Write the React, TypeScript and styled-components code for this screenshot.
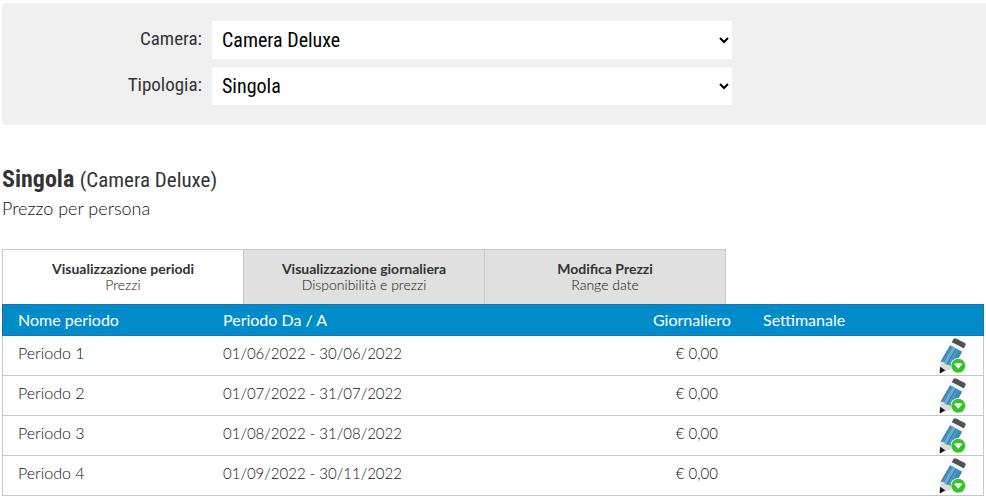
import React, { useState } from "react";
import styled, { createGlobalStyle } from "styled-components";

const GlobalStyle = createGlobalStyle`
  *, *::before, *::after { box-sizing: border-box; }
  body {
    margin: 0;
    background: #fff;
    color: #111;
    font: 300 15px/20px "Century Gothic", Lato, sans-serif;
  }
`;

const condensed = `"Liberation Sans Narrow", "Roboto Condensed", Roboto, sans-serif`;

const Page = styled.main`
  padding: 3px 0 0 2px;
`;

const FilterPanel = styled.form`
  display: grid;
  gap: 8px;
  padding: 18px 0 20px;
  background: #f0f0f0;
  border-radius: 4px 0 0 4px;
`;

const FilterRow = styled.div`
  display: grid;
  grid-template-columns: 200px minmax(0, 520px);
  column-gap: 10px;
  align-items: center;
`;

const FilterLabel = styled.label`
  color: #333;
  font: 19px/24px ${condensed};
  padding-bottom: 2px;
  text-align: right;
`;

const Select = styled.select`
  width: 100%;
  height: 38px;
  padding: 0 0 0 6px;
  border: 0;
  border-radius: 0;
  background-color: #fff;
  color: #000;
  font: 20px/24px ${condensed};
`;

const Heading = styled.header`
  padding: 40px 0 31px;
`;

const Title = styled.h1`
  margin: 0;
  color: #333;
  font: bold 24px/28px ${condensed};
`;

const RoomName = styled.span`
  font-size: 21px;
  font-weight: normal;
`;

const Subtitle = styled.p`
  margin: 4px 0 0;
  font-size: 18px;
  line-height: 20px;
`;

const Content = styled.section`
  margin-right: 2px;
`;

const Tabs = styled.div`
  display: flex;
`;

const Tab = styled.button<{ $active: boolean }>`
  flex: 0 1 242px;
  min-width: 0;
  height: 55px;
  padding: 0;
  border: 1px solid #c8c8c8;
  border-bottom: 0;
  background: ${(p) => (p.$active ? "#fff" : "#e0e0e0")};
  color: #111;
  font: 300 14px/16px "Century Gothic", Lato, sans-serif;
  cursor: pointer;

  & + & { margin-left: -1px; }
`;

const TabTitle = styled.strong`
  display: block;
  color: #333;
  font-weight: bold;
`;

const TabNote = styled.span`
  display: block;
`;

const PriceTable = styled.table`
  width: 100%;
  table-layout: fixed;
  border-collapse: separate;
  border-spacing: 0;
`;

const Col = styled.col<{ $width?: number }>`
  width: ${(p) => (p.$width ? `${p.$width}px` : "auto")};
`;

const HeaderCell = styled.th<{ $end?: boolean }>`
  height: 32px;
  padding: 0 ${(p) => (p.$end ? 20 : 0)}px 0 15px;
  border: solid #2a6ca8;
  border-width: 1px 0;
  background: #008ccb;
  color: #fff;
  font-size: 16px;
  font-weight: normal;
  text-align: ${(p) => (p.$end ? "right" : "left")};

  &:first-child { border-left-width: 1px; }
  &:last-child { border-right-width: 1px; }
`;

const Cell = styled.td<{ $end?: boolean }>`
  height: 40px;
  padding: 0 ${(p) => (p.$end ? 30 : 0)}px 5px 15px;
  border-bottom: 1px solid #c8c8c8;
  text-align: ${(p) => (p.$end ? "right" : "left")};

  &:first-child {
    border-left: 1px solid #c8c8c8;
    font-size: 16px;
  }
`;

const ActionCell = styled.td`
  padding: 0 16px 0 0;
  border: solid #c8c8c8;
  border-width: 0 1px 1px 0;
  text-align: right;
`;

const EditButton = styled.button`
  display: inline-block;
  width: 28px;
  height: 36px;
  padding: 0;
  border: 0;
  background: none;
  vertical-align: middle;
  cursor: pointer;

  svg { display: block; }
`;

function PencilIcon() {
  return (
    <svg width="28" height="36" viewBox="0 0 28 36" aria-hidden="true">
      <path d="M14.5 1Q15.5 -.2 17.5 .7L25.5 4.7Q27.3 5.7 26.3 7.7L24.8 10.6 12.6 4.3Z" fill="#4e5256" />
      <path d="M12.6 4.3 24.8 10.6 23.2 13.8 11 7.3Z" fill="#f1f2f3" />
      <path d="M11 7.3 23.2 13.8 14 30 1.5 23.4Z" fill="#3b88b4" />
      <path d="M12.8 8.3 16.5 10.3 7.3 26.4 3.5 24.4Z" fill="#68acd0" />
      <path d="M17 10.6 19.5 11.9 10.3 28 7.8 26.7Z" fill="#4d98c2" />
      <path d="M13.5 8.7 4.3 24.8M17 10.6 7.8 26.7" stroke="#286f9c" strokeWidth=".6" />
      <path d="M1.5 23.4 5 24.3 6.5 26.6 10 27.1 14 30 4.5 34 1 34.5Z" fill="#dddcda" />
      <path d="M1.1 28.8 6.3 32.2 1.5 35.2Q.6 35.5 .6 34.5Z" fill="#17191a" />
      <circle cx="19.3" cy="27.8" r="7.7" fill="#fff" />
      <circle cx="19.3" cy="27.8" r="7" fill="#33c526" />
      <path d="M15 25.8Q19.3 24.2 23.6 25.8L19.3 30.8Z" fill="#fff" />
    </svg>
  );
}

const tabs = [
  { title: "Visualizzazione periodi", note: "Prezzi" },
  { title: "Visualizzazione giornaliera", note: "Disponibilità e prezzi" },
  { title: "Modifica Prezzi", note: "Range date" },
];

const periods = [
  { name: "Periodo 1", range: "01/06/2022 - 30/06/2022", daily: "€ 0,00" },
  { name: "Periodo 2", range: "01/07/2022 - 31/07/2022", daily: "€ 0,00" },
  { name: "Periodo 3", range: "01/08/2022 - 31/08/2022", daily: "€ 0,00" },
  { name: "Periodo 4", range: "01/09/2022 - 30/11/2022", daily: "€ 0,00" },
];

export default function App() {
  const [active, setActive] = useState(0);
  return (
    <Page>
      <GlobalStyle />
      <FilterPanel>
        <FilterRow>
          <FilterLabel htmlFor="camera">Camera:</FilterLabel>
          <Select id="camera">
            <option>Camera Deluxe</option>
          </Select>
        </FilterRow>
        <FilterRow>
          <FilterLabel htmlFor="tipologia">Tipologia:</FilterLabel>
          <Select id="tipologia">
            <option>Singola</option>
          </Select>
        </FilterRow>
      </FilterPanel>
      <Heading>
        <Title>
          Singola <RoomName>(Camera Deluxe)</RoomName>
        </Title>
        <Subtitle>Prezzo per persona</Subtitle>
      </Heading>
      <Content>
        <Tabs role="tablist">
          {tabs.map((tab, i) => (
            <Tab
              key={tab.title}
              type="button"
              role="tab"
              aria-selected={i === active}
              $active={i === active}
              onClick={() => setActive(i)}
            >
              <TabTitle>{tab.title}</TabTitle>
              <TabNote>{tab.note}</TabNote>
            </Tab>
          ))}
        </Tabs>
        <PriceTable>
          <colgroup>
            <Col $width={206} />
            <Col />
            <Col $width={110} />
            <Col $width={136} />
            <Col $width={100} />
          </colgroup>
          <thead>
            <tr>
              <HeaderCell>Nome periodo</HeaderCell>
              <HeaderCell>Periodo Da / A</HeaderCell>
              <HeaderCell $end>Giornaliero</HeaderCell>
              <HeaderCell>Settimanale</HeaderCell>
              <HeaderCell as="td" />
            </tr>
          </thead>
          <tbody>
            {periods.map((p) => (
              <tr key={p.name}>
                <Cell>{p.name}</Cell>
                <Cell>{p.range}</Cell>
                <Cell $end>{p.daily}</Cell>
                <Cell />
                <ActionCell>
                  <EditButton type="button" aria-label={`Modifica ${p.name}`}>
                    <PencilIcon />
                  </EditButton>
                </ActionCell>
              </tr>
            ))}
          </tbody>
        </PriceTable>
      </Content>
    </Page>
  );
}
